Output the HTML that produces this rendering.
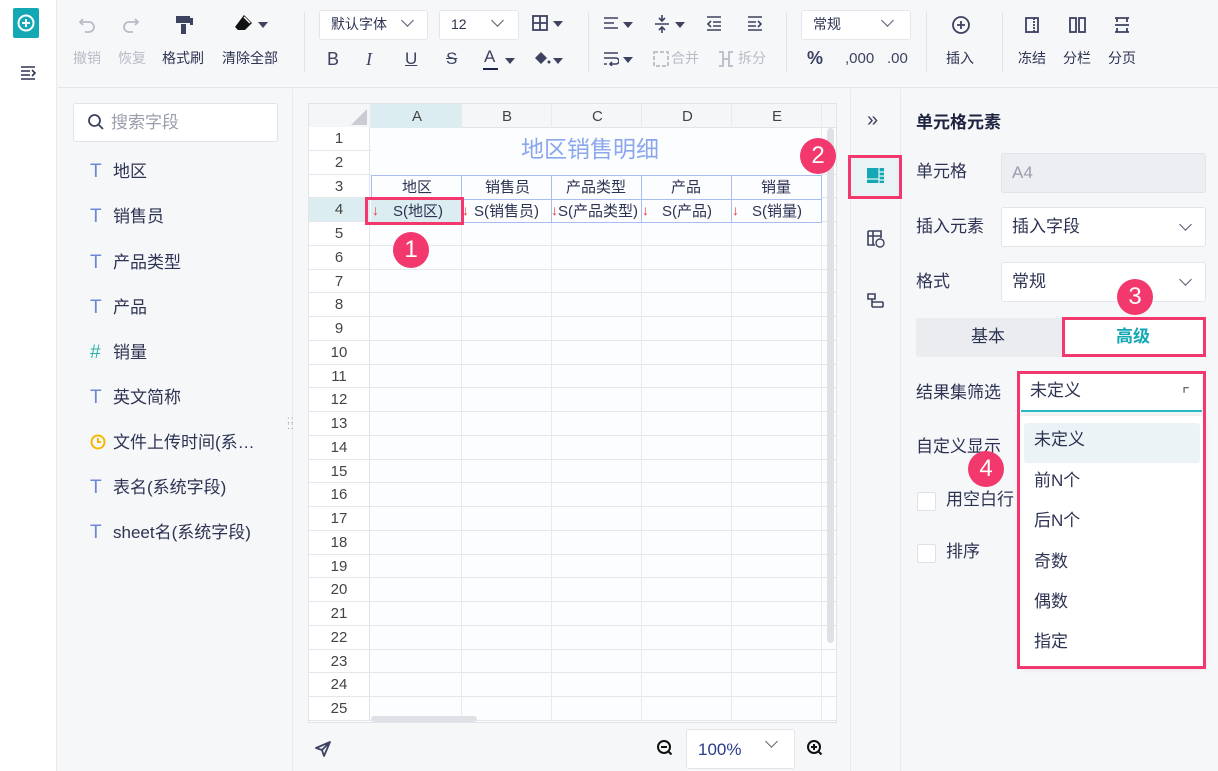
<!DOCTYPE html>
<html><head><meta charset="utf-8">
<style>
*{box-sizing:border-box;margin:0;padding:0}
body{width:1218px;height:771px;position:relative;overflow:hidden;background:#f6f7f9;font-family:"Liberation Sans","Noto Sans CJK SC",sans-serif;color:#2d3352;font-size:16px;line-height:1.15}
.a{position:absolute}
.t{position:absolute;white-space:nowrap}
.tb{color:#2d3352;font-size:14px}
.dis{color:#b9bcc6}
.sel{position:absolute;background:#fff;border:1px solid #e3e5ea;border-radius:3px}
.chev{position:absolute;width:9px;height:9px;border-right:1.6px solid #555b70;border-bottom:1.6px solid #555b70;transform:rotate(45deg)}
.tri{display:inline-block;width:0;height:0;border-left:5px solid transparent;border-right:5px solid transparent;border-top:6px solid #3c4260;vertical-align:middle}
.pink{position:absolute;border:3px solid #f2386c}
.circ{position:absolute;width:36px;height:36px;border-radius:50%;background:#f2386c;color:#fff;font-size:24px;text-align:center;line-height:36px}
.fld{position:absolute;left:90px;font-size:17px;color:#2d3352}
.fld b{display:inline-block;width:23px;color:#6a88d6;font-weight:normal;font-size:19px}
.rows div{height:23.75px;border-bottom:1px solid #e4e6ec}
.nums div{height:23.75px;font-size:15px;color:#444;text-align:center;line-height:23px;border-bottom:1px solid #e4e6ec}
.lbl{position:absolute;left:916px;font-size:17px;color:#2d3352}
.dd{position:absolute;left:1034px;font-size:17px;color:#2d3352}
</style></head><body>
<!-- left rail -->
<div class="a" style="left:0;top:0;width:57px;height:771px;background:#fff;border-right:1px solid #e8eaee"></div>
<div class="a" style="left:13px;top:8px;width:26px;height:30px;background:#13a8b4;border-radius:2px"></div>
<svg class="a" style="left:16px;top:13px" width="20" height="20" viewBox="0 0 20 20"><circle cx="10" cy="10" r="7.5" fill="none" stroke="#fff" stroke-width="2"/><path d="M10 6v8M6 10h8" stroke="#fff" stroke-width="2"/></svg>
<svg class="a" style="left:20px;top:66px" width="18" height="14" viewBox="0 0 18 14"><path d="M1 1h14M1 5h9M1 9h9M1 13h14M12 4l3 3-3 3" fill="none" stroke="#2d3352" stroke-width="1.6"/></svg>
<!-- toolbar -->
<div class="a" style="left:58px;top:0;width:1160px;height:88px;background:#f6f7f9;border-bottom:1px solid #e4e6ea"></div>
<svg class="a" style="left:78px;top:15px" width="20" height="18"><path d="M5 4l-3 3 3 3M2 7h9a5 5 0 010 10H7" fill="none" stroke="#b9bcc6" stroke-width="1.8"/></svg>
<svg class="a" style="left:120px;top:15px" width="20" height="18"><path d="M15 4l3 3-3 3M18 7H9a5 5 0 000 10h4" fill="none" stroke="#b9bcc6" stroke-width="1.8"/></svg>
<div class="t tb dis" style="left:73px;top:50px">撤销</div>
<div class="t tb dis" style="left:118px;top:50px">恢复</div>
<svg class="a" style="left:175px;top:14px" width="20" height="22"><rect x="1" y="2" width="14" height="7" fill="#3c4260"/><rect x="15" y="4" width="3" height="7" fill="#3c4260"/><rect x="6" y="10" width="5" height="10" fill="#3c4260"/></svg>
<div class="t tb" style="left:162px;top:50px">格式刷</div>
<svg class="a" style="left:234px;top:12px" width="40" height="24"><path d="M10 3l8 8-7 7H4l-3-3z" fill="#111"/><path d="M10 5l6 6" stroke="#fff" stroke-width="1.5"/><path d="M24 10h10l-5 6z" fill="#3c4260"/></svg>
<div class="t tb" style="left:222px;top:50px">清除全部</div>
<div class="a" style="left:304px;top:12px;width:1px;height:60px;background:#e2e4e8"></div>
<div class="sel" style="left:319px;top:10px;width:109px;height:30px"></div>
<div class="t" style="left:331px;top:16px;font-size:14px">默认字体</div><div class="chev" style="left:403px;top:16px"></div>
<div class="sel" style="left:439px;top:10px;width:80px;height:30px"></div>
<div class="t" style="left:451px;top:16px;font-size:14px">12</div><div class="chev" style="left:493px;top:16px"></div>
<svg class="a" style="left:532px;top:15px" width="16" height="16"><rect x="1" y="1" width="14" height="14" fill="none" stroke="#3c4260" stroke-width="1.8"/><path d="M8 1v14M1 8h14" stroke="#3c4260" stroke-width="1.8"/></svg>
<span class="a tri" style="left:553px;top:21px"></span>
<div class="t" style="left:327px;top:49px;font-size:18px;color:#3c4260">B</div>
<div class="t" style="left:366px;top:49px;font-size:18px;font-style:italic;color:#3c4260;font-family:'Liberation Serif'">I</div>
<div class="t" style="left:405px;top:49px;font-size:17px;text-decoration:underline;color:#3c4260">U</div>
<div class="t" style="left:446px;top:49px;font-size:17px;text-decoration:line-through;color:#3c4260">S</div>
<div class="t" style="left:484px;top:47px;font-size:17px;color:#3c4260">A</div>
<div class="a" style="left:483px;top:68px;width:15px;height:2px;background:#1d2350"></div>
<span class="a tri" style="left:505px;top:58px"></span>
<svg class="a" style="left:532px;top:50px" width="20" height="18"><path d="M3 8l6-6 6 6-6 6z" fill="#3c4260"/><circle cx="17" cy="12" r="1.5" fill="#3c4260"/></svg>
<span class="a tri" style="left:553px;top:58px"></span>
<div class="a" style="left:588px;top:12px;width:1px;height:60px;background:#e2e4e8"></div>
<svg class="a" style="left:603px;top:17px" width="16" height="14"><path d="M1 1h14M1 6h10M1 11h14" stroke="#3c4260" stroke-width="1.6"/></svg><span class="a tri" style="left:623px;top:22px"></span>
<svg class="a" style="left:654px;top:14px" width="16" height="20"><path d="M1 10h14M8 1v6M5 4l3 3 3-3M8 19v-6M5 16l3-3 3 3" fill="none" stroke="#3c4260" stroke-width="1.6"/></svg><span class="a tri" style="left:675px;top:22px"></span>
<svg class="a" style="left:706px;top:16px" width="16" height="16"><path d="M1 1h14M7 6h8M7 10h8M1 14h14M5 5L2 8l3 3" fill="none" stroke="#3c4260" stroke-width="1.6"/></svg>
<svg class="a" style="left:747px;top:16px" width="16" height="16"><path d="M1 1h14M1 6h8M1 10h8M1 14h14M11 5l3 3-3 3" fill="none" stroke="#3c4260" stroke-width="1.6"/></svg>
<svg class="a" style="left:603px;top:52px" width="16" height="14"><path d="M1 1h14M1 6h12a3 3 0 010 6H7M1 12h3M9 10l-2 2 2 2" fill="none" stroke="#3c4260" stroke-width="1.6"/></svg><span class="a tri" style="left:623px;top:57px"></span>
<svg class="a" style="left:653px;top:51px" width="16" height="16"><rect x="1" y="1" width="14" height="14" fill="none" stroke="#b9bcc6" stroke-width="1.8" stroke-dasharray="4 2"/></svg>
<div class="t tb dis" style="left:671px;top:50px">合并</div>
<svg class="a" style="left:718px;top:51px" width="16" height="16"><path d="M1 1h4v14H1M15 1h-4v14h4M5 8h6" fill="none" stroke="#b9bcc6" stroke-width="1.8"/></svg>
<div class="t tb dis" style="left:738px;top:50px">拆分</div>
<div class="a" style="left:786px;top:12px;width:1px;height:60px;background:#e2e4e8"></div>
<div class="sel" style="left:801px;top:10px;width:110px;height:30px"></div>
<div class="t" style="left:813px;top:16px;font-size:14px">常规</div><div class="chev" style="left:883px;top:16px"></div>
<div class="t" style="left:807px;top:48px;font-size:18px;font-weight:bold;color:#3c4260">%</div>
<div class="t" style="left:845px;top:50px;font-size:15px;color:#3c4260">,000</div>
<div class="t" style="left:887px;top:50px;font-size:15px;color:#3c4260">.00</div>
<div class="a" style="left:926px;top:12px;width:1px;height:60px;background:#e2e4e8"></div>
<svg class="a" style="left:951px;top:15px" width="20" height="20"><circle cx="10" cy="10" r="8" fill="none" stroke="#3c4260" stroke-width="1.8"/><path d="M10 6v8M6 10h8" stroke="#3c4260" stroke-width="1.8"/></svg>
<div class="t tb" style="left:946px;top:50px">插入</div>
<div class="a" style="left:1002px;top:12px;width:1px;height:60px;background:#e2e4e8"></div>
<svg class="a" style="left:1025px;top:17px" width="16" height="16"><rect x="1" y="1" width="12" height="14" fill="none" stroke="#3c4260" stroke-width="1.8"/><path d="M9 1v14" stroke="#3c4260" stroke-width="1.8" stroke-dasharray="2 1"/></svg>
<svg class="a" style="left:1069px;top:17px" width="18" height="16"><rect x="1" y="1" width="6" height="14" fill="none" stroke="#3c4260" stroke-width="1.8"/><rect x="10" y="1" width="6" height="14" fill="none" stroke="#3c4260" stroke-width="1.8"/></svg>
<svg class="a" style="left:1114px;top:17px" width="16" height="16"><path d="M1 1h14M1 15h14M3 1v4M13 1v4M3 15v-4M13 15v-4M1 8h14" fill="none" stroke="#3c4260" stroke-width="1.8"/></svg>
<div class="t tb" style="left:1018px;top:50px">冻结</div>
<div class="t tb" style="left:1063px;top:50px">分栏</div>
<div class="t tb" style="left:1108px;top:50px">分页</div>
<!-- field panel -->
<div class="a" style="left:292px;top:89px;width:1px;height:682px;background:#e8eaee"></div>
<div class="a" style="left:73px;top:103px;width:205px;height:39px;background:#fff;border:1px solid #e1e3e8;border-radius:3px"></div>
<svg class="a" style="left:87px;top:113px" width="18" height="18"><circle cx="7.5" cy="7.5" r="5.5" fill="none" stroke="#3c4260" stroke-width="1.8"/><path d="M11.5 11.5l4.5 4.5" stroke="#3c4260" stroke-width="1.8"/></svg>
<div class="t" style="left:111px;top:113px;font-size:17px;color:#9a9eac">搜索字段</div>
<div class="fld" style="top:161px"><b>T</b>地区</div>
<div class="fld" style="top:206px"><b>T</b>销售员</div>
<div class="fld" style="top:252px"><b>T</b>产品类型</div>
<div class="fld" style="top:297px"><b>T</b>产品</div>
<div class="fld" style="top:342px"><b style="color:#2ab3a5">#</b>销量</div>
<div class="fld" style="top:387px"><b>T</b>英文简称</div>
<div class="fld" style="top:432px"><b><svg width="16" height="16" style="vertical-align:-2px"><circle cx="8" cy="8" r="6.5" fill="none" stroke="#f5b800" stroke-width="2"/><path d="M8 4v4h3" fill="none" stroke="#f5b800" stroke-width="2"/></svg></b>文件上传时间(系…</div>
<div class="fld" style="top:477px"><b>T</b>表名(系统字段)</div>
<div class="fld" style="top:522px"><b>T</b>sheet名(系统字段)</div>
<div class="t" style="left:287px;top:418px;font-size:10px;color:#999;line-height:6px;letter-spacing:1px">::<br>::</div>
<!-- grid -->
<div class="a" style="left:308px;top:103px;width:529px;height:620px;background:#fcfdfe;border:1px solid #e1e3e8;overflow:hidden">
 <div class="a" style="left:0;top:0;width:528px;height:24px;background:#f5f6f8;border-bottom:1px solid #e1e3e8"></div>
 <div class="a" style="left:61px;top:0;width:91px;height:24px;background:#dcedf1"></div>
 <svg class="a" style="left:42px;top:5px" width="16" height="16"><path d="M16 0V16H0z" fill="#c9ccd3"/></svg>
 <div class="t" style="left:103px;top:4px;font-size:15px;color:#444">A</div>
 <div class="t" style="left:193px;top:4px;font-size:15px;color:#444">B</div>
 <div class="t" style="left:283px;top:4px;font-size:15px;color:#444">C</div>
 <div class="t" style="left:373px;top:4px;font-size:15px;color:#444">D</div>
 <div class="t" style="left:463px;top:4px;font-size:15px;color:#444">E</div>
 <div class="a rows" style="left:0;top:23px;width:528px">
 <div></div><div></div><div></div><div></div><div></div><div></div><div></div><div></div><div></div><div></div><div></div><div></div><div></div><div></div><div></div><div></div><div></div><div></div><div></div><div></div><div></div><div></div><div></div><div></div><div></div>
 </div>
 <div class="a nums" style="left:0;top:23px;width:61px;background:#fff;border-right:1px solid #e1e3e8">
 <div>1</div><div>2</div><div>3</div><div style="background:#dcedf1">4</div><div>5</div><div>6</div><div>7</div><div>8</div><div>9</div><div>10</div><div>11</div><div>12</div><div>13</div><div>14</div><div>15</div><div>16</div><div>17</div><div>18</div><div>19</div><div>20</div><div>21</div><div>22</div><div>23</div><div>24</div><div>25</div>
 </div>
 <div class="a" style="left:152px;top:0;width:1px;height:620px;background:#e8eaee"></div>
 <div class="a" style="left:242px;top:0;width:1px;height:620px;background:#e8eaee"></div>
 <div class="a" style="left:332px;top:0;width:1px;height:620px;background:#e8eaee"></div>
 <div class="a" style="left:422px;top:0;width:1px;height:620px;background:#e8eaee"></div>
 <div class="a" style="left:512px;top:0;width:1px;height:620px;background:#e8eaee"></div>
 <div class="a" style="left:62px;top:24px;width:450px;height:47px;background:#fcfdfe"></div>
 <div class="t" style="left:212px;top:32px;font-size:23px;color:#8aa7ee">地区销售明细</div>
 <div class="a" style="left:62px;top:71px;width:451px;height:48px;border:1px solid #a9bdf0;background:#fcfdfe"></div>
 <div class="a" style="left:62px;top:95px;width:451px;height:1px;background:#a9bdf0"></div>
 <div class="a" style="left:152px;top:71px;width:1px;height:48px;background:#a9bdf0"></div>
 <div class="a" style="left:242px;top:71px;width:1px;height:48px;background:#a9bdf0"></div>
 <div class="a" style="left:332px;top:71px;width:1px;height:48px;background:#a9bdf0"></div>
 <div class="a" style="left:422px;top:71px;width:1px;height:48px;background:#a9bdf0"></div>
 <div class="a" style="left:62px;top:96px;width:90px;height:23px;background:#dcedf1"></div>
 <div class="t" style="left:93px;top:75px;font-size:15px">地区</div>
 <div class="t" style="left:176px;top:75px;font-size:15px">销售员</div>
 <div class="t" style="left:257px;top:75px;font-size:15px">产品类型</div>
 <div class="t" style="left:362px;top:75px;font-size:15px">产品</div>
 <div class="t" style="left:452px;top:75px;font-size:15px">销量</div>
 <div class="t" style="left:63px;top:98px;font-size:14px;color:#e33">↓</div><div class="t" style="left:84px;top:99px;font-size:15px">S(地区)</div>
 <div class="t" style="left:153px;top:98px;font-size:14px;color:#e33">↓</div><div class="t" style="left:165px;top:99px;font-size:15px">S(销售员)</div>
 <div class="t" style="left:242px;top:98px;font-size:14px;color:#e33">↓</div><div class="t" style="left:249px;top:99px;font-size:15px">S(产品类型)</div>
 <div class="t" style="left:333px;top:98px;font-size:14px;color:#e33">↓</div><div class="t" style="left:353px;top:99px;font-size:15px">S(产品)</div>
 <div class="t" style="left:423px;top:98px;font-size:14px;color:#e33">↓</div><div class="t" style="left:443px;top:99px;font-size:15px">S(销量)</div>
 <div class="a" style="left:518px;top:24px;width:7px;height:515px;background:#dfe1e6;border-radius:4px"></div>
 <div class="a" style="left:62px;top:612px;width:106px;height:6px;background:#dfe1e6;border-radius:3px"></div>
</div>
<svg class="a" style="left:314px;top:740px" width="18" height="18"><path d="M16 2L2 8l6 2 2 6z M8 10l8-8" fill="none" stroke="#3c4260" stroke-width="1.8" stroke-linejoin="round"/></svg>
<svg class="a" style="left:656px;top:739px" width="18" height="18"><circle cx="8" cy="8" r="6" fill="none" stroke="#111" stroke-width="2"/><path d="M5 8h6M12.5 12.5l3 3" stroke="#111" stroke-width="2"/></svg>
<div class="a" style="left:686px;top:729px;width:109px;height:40px;background:#fff;border:1px solid #e3e5ea;border-radius:3px"></div>
<div class="t" style="left:698px;top:740px;font-size:17px;color:#2a3a8c">100%</div>
<div class="chev" style="left:767px;top:737px;border-color:#666"></div>
<svg class="a" style="left:806px;top:739px" width="18" height="18"><circle cx="8" cy="8" r="6" fill="none" stroke="#111" stroke-width="2"/><path d="M5 8h6M8 5v6M12.5 12.5l3 3" stroke="#111" stroke-width="2"/></svg>
<!-- right icon strip -->
<div class="a" style="left:850px;top:89px;width:1px;height:682px;background:#e8eaee"></div>
<div class="a" style="left:900px;top:89px;width:1px;height:682px;background:#e8eaee"></div>
<div class="t" style="left:867px;top:109px;font-size:20px;color:#3c4260">»</div>
<div class="a" style="left:851px;top:156px;width:49px;height:41px;background:#e9f3f6"></div>
<svg class="a" style="left:867px;top:168px" width="18" height="16"><rect x="0" y="0" width="17" height="15" fill="#13a8b4"/><path d="M12 0v15M12 4h5M12 8h5M12 12h5M0 11h12" stroke="#e9f3f6" stroke-width="1.2"/></svg>
<svg class="a" style="left:867px;top:230px" width="18" height="18"><path d="M1 1h13v7M1 1v14h7M1 6h13M6 1v14" fill="none" stroke="#3c4260" stroke-width="1.6"/><circle cx="13" cy="13" r="4" fill="none" stroke="#3c4260" stroke-width="1.4"/></svg>
<svg class="a" style="left:867px;top:293px" width="18" height="16"><path d="M1 1h7v5H1zM5 6v8M5 9h11M5 14h11M16 9v5" fill="none" stroke="#3c4260" stroke-width="1.6"/></svg>
<!-- properties -->
<div class="t" style="left:916px;top:113px;font-size:17px;font-weight:bold;color:#1e2340">单元格元素</div>
<div class="lbl" style="top:162px">单元格</div>
<div class="a" style="left:1001px;top:153px;width:205px;height:40px;background:#eceef2;border:1px solid #e1e3e8;border-radius:3px"></div>
<div class="t" style="left:1012px;top:163px;font-size:17px;color:#9a9eac">A4</div>
<div class="lbl" style="top:217px">插入元素</div>
<div class="sel" style="left:1001px;top:207px;width:205px;height:40px"></div>
<div class="t" style="left:1012px;top:217px;font-size:17px">插入字段</div><div class="chev" style="left:1181px;top:220px"></div>
<div class="lbl" style="top:272px">格式</div>
<div class="sel" style="left:1001px;top:262px;width:205px;height:40px"></div>
<div class="t" style="left:1012px;top:272px;font-size:17px">常规</div><div class="chev" style="left:1181px;top:275px"></div>
<div class="a" style="left:916px;top:318px;width:290px;height:39px;background:#eaecf0;border-radius:3px"></div>
<div class="t" style="left:971px;top:327px;font-size:17px">基本</div>
<div class="a" style="left:1062px;top:317px;width:144px;height:40px;background:#fff"></div>
<div class="t" style="left:1116px;top:327px;font-size:17px;font-weight:bold;color:#13a8b4">高级</div>
<div class="lbl" style="top:383px">结果集筛选</div>
<div class="a" style="left:1021px;top:374px;width:181px;height:38px;background:#fff;border-bottom:2px solid #2bb8c4"></div>
<div class="t" style="left:1030px;top:381px;font-size:17px">未定义</div>
<div class="t" style="left:1182px;top:385px;font-size:17px;color:#555">⌜</div>
<div class="lbl" style="top:437px">自定义显示</div>
<div class="a" style="left:917px;top:492px;width:19px;height:19px;background:#fff;border:1px solid #dfe1e6;border-radius:2px"></div>
<div class="t" style="left:946px;top:490px;font-size:17px">用空白行</div>
<div class="a" style="left:917px;top:544px;width:19px;height:19px;background:#fff;border:1px solid #dfe1e6;border-radius:2px"></div>
<div class="t" style="left:946px;top:542px;font-size:17px">排序</div>
<div class="a" style="left:1020px;top:416px;width:183px;height:250px;background:#fff;box-shadow:0 2px 8px rgba(0,0,0,.1)"></div>
<div class="a" style="left:1024px;top:423px;width:176px;height:40px;background:#ebf3f6;border-radius:3px"></div>
<div class="dd" style="top:430px">未定义</div>
<div class="dd" style="top:471px">前N个</div>
<div class="dd" style="top:511px">后N个</div>
<div class="dd" style="top:552px">奇数</div>
<div class="dd" style="top:592px">偶数</div>
<div class="dd" style="top:632px">指定</div>
<!-- annotations -->
<div class="pink" style="left:365px;top:197px;width:99px;height:28px"></div>
<div class="pink" style="left:848px;top:155px;width:54px;height:44px"></div>
<div class="pink" style="left:1062px;top:317px;width:144px;height:40px"></div>
<div class="pink" style="left:1017px;top:371px;width:189px;height:298px"></div>
<div class="circ" style="left:393px;top:232px">1</div>
<div class="circ" style="left:800px;top:138px">2</div>
<div class="circ" style="left:1117px;top:279px">3</div>
<div class="circ" style="left:968px;top:451px">4</div>
</body></html>
